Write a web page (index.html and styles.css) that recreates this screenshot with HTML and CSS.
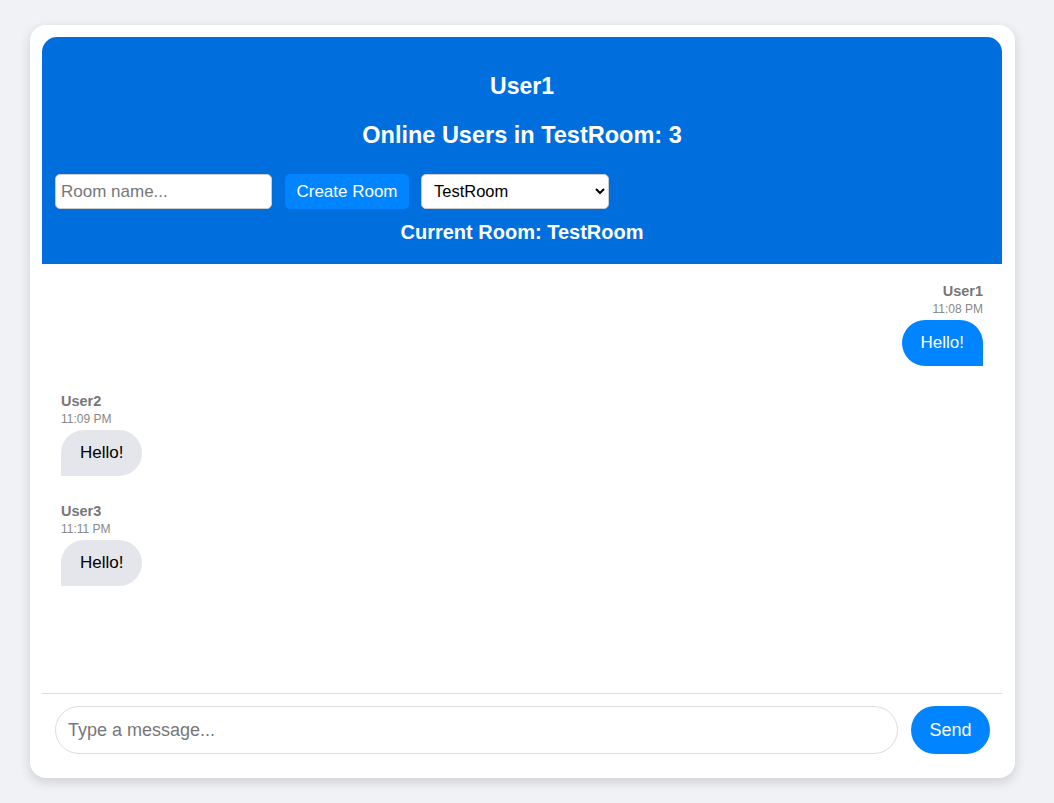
FILE: index.html
```html
<!DOCTYPE html>
<html lang="en">
<head>
<meta charset="utf-8">
<title>Chat</title>
<link rel="stylesheet" href="styles.css">
</head>
<body>
<div class="card">
  <header class="header">
    <h2 class="user">User1</h2>
    <h2 class="online">Online Users in TestRoom: 3</h2>
    <div class="controls">
      <input class="room-input" type="text" placeholder="Room name...">
      <button class="create-btn">Create Room</button>
      <select class="room-select">
        <option>TestRoom</option>
      </select>
    </div>
    <h3 class="current">Current Room: TestRoom</h3>
  </header>
  <main class="messages">
    <div class="msg sent">
      <div class="name">User1</div>
      <div class="time">11:08 PM</div>
      <div class="bubble">Hello!</div>
    </div>
    <div class="msg recv">
      <div class="name">User2</div>
      <div class="time">11:09 PM</div>
      <div class="bubble">Hello!</div>
    </div>
    <div class="msg recv">
      <div class="name">User3</div>
      <div class="time">11:11 PM</div>
      <div class="bubble">Hello!</div>
    </div>
  </main>
  <footer class="composer">
    <input class="msg-input" type="text" placeholder="Type a message...">
    <button class="send-btn">Send</button>
  </footer>
</div>
</body>
</html>
```

FILE: styles.css
```css
* { box-sizing: border-box; }
html, body { height: 100%; }
body {
  margin: 0;
  background: #f0f2f5;
  font-family: "Liberation Sans", Arial, sans-serif;
  padding: 25px 39px 25px 30px;
}
.card {
  height: 100%;
  background: #fff;
  border-radius: 16px;
  box-shadow: 0 4px 12px rgba(0,0,0,0.15);
  padding: 12px 13px 12px 12px;
  display: flex;
  flex-direction: column;
}
.header {
  background: #006fdd;
  color: #fff;
  border-radius: 15px 15px 0 0;
  padding: 0 13px;
  display: flex;
  flex-direction: column;
  align-items: stretch;
  height: 227px;
}
.header h2, .header h3 { margin: 0; text-align: center; font-weight: bold; }
.user { font-size: 23px; line-height: 27px; margin-top: 36px !important; }
.online { font-size: 23.5px; line-height: 27px; margin-top: 22px !important; }
.controls {
  display: flex;
  gap: 13px;
  margin-top: 25px;
  height: 35px;
}
.room-input {
  width: 217px;
  height: 35px;
  border: 1px solid #ccc;
  border-radius: 5px;
  padding: 0 5px;
  font-family: inherit;
  font-size: 17px;
  color: #000;
}
.room-input::placeholder { color: #777; }
.create-btn {
  width: 124px;
  height: 35px;
  border: none;
  border-radius: 5px;
  background: #0084ff;
  color: #fff;
  font-family: inherit;
  font-size: 17px;
  padding: 0;
}
.room-select {
  width: 188px;
  height: 35px;
  border: 1px solid #ccc;
  border-radius: 5px;
  background: #fff;
  color: #000;
  font-family: inherit;
  font-size: 16.5px;
  padding: 0 8px 1px;
  margin-left: -1px;
}
.current { font-size: 20px; line-height: 24px; margin-top: 11px !important; }
.messages {
  flex: 1;
  padding: 19px 19px 0;
  display: flex;
  flex-direction: column;
  overflow: hidden;
}
.msg { display: flex; flex-direction: column; margin-bottom: 27px; }
.msg.sent { align-items: flex-end; }
.msg.recv { align-items: flex-start; }
.name { font-size: 14.5px; line-height: 16px; font-weight: bold; color: #777; }
.time { font-size: 12px; line-height: 14px; color: #888; margin-top: 3px; }
.bubble {
  margin-top: 4px;
  font-size: 17px;
  line-height: 22px;
  padding: 12px 19px;
  border-radius: 23px;
}
.sent .bubble { background: #0084ff; color: #fff; border-bottom-right-radius: 0; }
.recv .bubble { background: #e4e6eb; color: #000; border-bottom-left-radius: 0; }
.composer {
  border-top: 1px solid #ddd;
  padding: 12px 12px 12px 13px;
  display: flex;
  gap: 13px;
}
.msg-input {
  flex: 1;
  height: 48px;
  border: 1px solid #ddd;
  border-radius: 24px;
  padding: 0 12px;
  font-family: inherit;
  font-size: 18px;
  color: #000;
}
.msg-input::placeholder { color: #777; }
.send-btn {
  width: 79px;
  height: 48px;
  border: none;
  border-radius: 24px;
  background: #0084ff;
  color: #fff;
  font-family: inherit;
  font-size: 18px;
  padding: 0;
}
```
